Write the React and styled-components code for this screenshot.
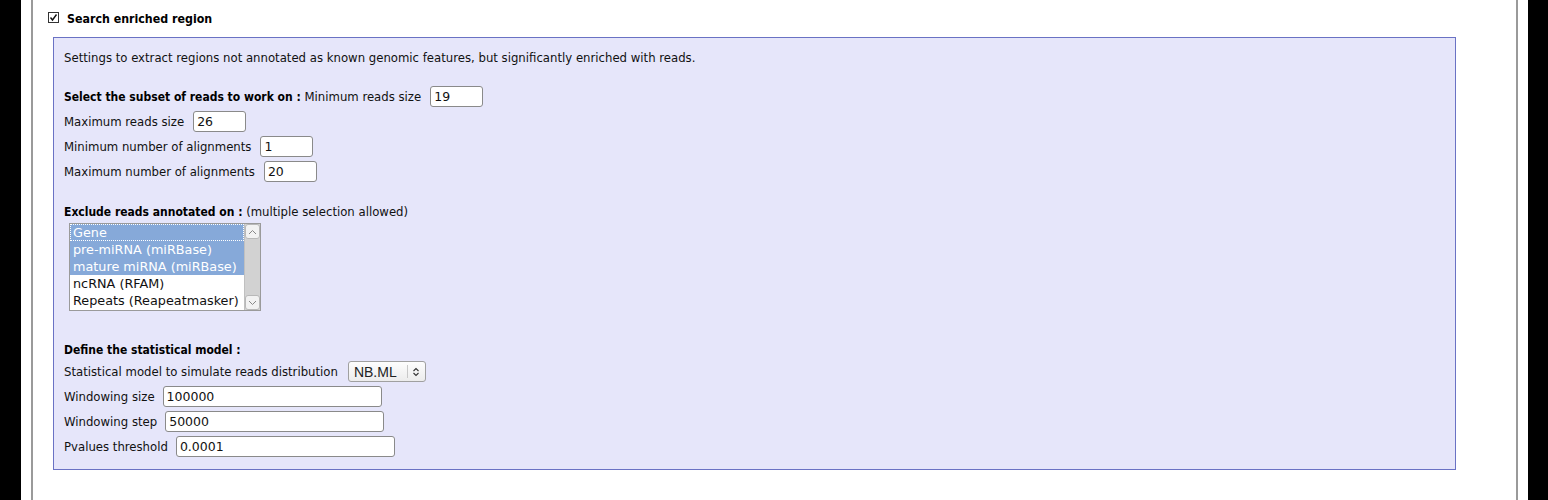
import React from "react"
import styled, { createGlobalStyle } from "styled-components"

const GlobalStyle = createGlobalStyle`
  html, body {
    margin: 0;
    padding: 0;
    background: #000;
  }
  body {
    font-family: "DejaVu Sans Condensed", "DejaVu Sans", sans-serif;
    font-size: 13px;
    color: #111;
  }
`

const annotations = [
  { label: "Gene", selected: true, focus: true },
  { label: "pre-miRNA (miRBase)", selected: true },
  { label: "mature miRNA (miRBase)", selected: true },
  { label: "ncRNA (RFAM)" },
  { label: "Repeats (Reapeatmasker)" },
]

const readFields = [
  { label: "Maximum reads size", value: "26" },
  { label: "Minimum number of alignments", value: "1" },
  { label: "Maximum number of alignments", value: "20" },
]

const windowFields = [
  { label: "Windowing size", value: "100000" },
  { label: "Windowing step", value: "50000" },
  { label: "Pvalues threshold", value: "0.0001" },
]

const CheckIcon = () => (
  <svg width="11" height="11" viewBox="0 0 11 11">
    <rect x="0.5" y="0.5" width="10" height="10" fill="#fff" stroke="#333" />
    <path d="M2.5 5.5 L4.5 8 L8.5 2.5" fill="none" stroke="#111" strokeWidth="1.4" />
  </svg>
)

const App = () => {
  return (
    <Page>
      <GlobalStyle />
      <Frame>
        <Header>
          <CheckIcon />
          <HeaderLabel>Search enriched region</HeaderLabel>
        </Header>
        <Panel>
          <Intro>
            Settings to extract regions not annotated as known genomic features, but
            significantly enriched with reads.
          </Intro>

          <Section>
            <Row>
              <Strong>Select the subset of reads to work on :</Strong>
              &nbsp;Minimum reads size
              <TextBox defaultValue="19" />
            </Row>
            {readFields.map(f => (
              <Row key={f.label}>
                {f.label}
                <TextBox defaultValue={f.value} />
              </Row>
            ))}
          </Section>

          <Title>
            <Strong>Exclude reads annotated on :</Strong> (multiple selection allowed)
          </Title>
          <ListBox>
            <Options>
              {annotations.map(a => (
                <Option key={a.label} $selected={a.selected} $focus={a.focus}>
                  {a.label}
                </Option>
              ))}
            </Options>
            <ScrollBar>
              <ScrollButton>
                <svg width="9" height="6" viewBox="0 0 9 6">
                  <path d="M1 5 L4.5 1.5 L8 5" fill="none" stroke="#888" />
                </svg>
              </ScrollButton>
              <ScrollTrack />
              <ScrollButton>
                <svg width="9" height="6" viewBox="0 0 9 6">
                  <path d="M1 1 L4.5 4.5 L8 1" fill="none" stroke="#888" />
                </svg>
              </ScrollButton>
            </ScrollBar>
          </ListBox>

          <ModelTitle>
            <Strong>Define the statistical model :</Strong>
          </ModelTitle>
          <Row>
            Statistical model to simulate reads distribution
            <SelectBox>
              <SelectValue>NB.ML</SelectValue>
              <SelectArrow>
                <svg width="8" height="10" viewBox="0 0 8 10">
                  <path d="M1.5 4 L4 1.5 L6.5 4 M1.5 6 L4 8.5 L6.5 6" fill="none" stroke="#333" strokeWidth="1.1" />
                </svg>
              </SelectArrow>
            </SelectBox>
          </Row>
          {windowFields.map(f => (
            <Row key={f.label}>
              {f.label}
              <TextBox $wide defaultValue={f.value} />
            </Row>
          ))}
        </Panel>
      </Frame>
    </Page>
  )
}

export default App

const Page = styled.div`
  margin: 0 20px 0 21px;
  background: #fff;
  min-height: 500px;
  padding: 0 10px;
`
const Frame = styled.div`
  border-left: 2px solid #9a9a9a;
  border-right: 2px solid #9a9a9a;
  min-height: 500px;
  padding: 0 60px 0 15px;
  box-sizing: border-box;
`
const Header = styled.div`
  display: flex;
  align-items: center;
  height: 20px;
  padding-top: 9px;
  margin-bottom: 8px;
  svg {
    margin-top: -3px;
  }
`
const HeaderLabel = styled.span`
  margin-left: 8px;
  font-weight: bold;
  font-size: 12.3px;
  color: #000;
`
const Panel = styled.div`
  margin-left: 5px;
  background: #e6e6fa;
  border: 1px solid #6a72c4;
  padding: 10px 10px 10px 10px;
`
const Intro = styled.div`
  line-height: 20px;
  height: 20px;
`
const Section = styled.div`
  margin-top: 16px;
  margin-bottom: 18px;
`
const Row = styled.div`
  display: flex;
  align-items: center;
  height: 25px;
  white-space: pre;
`
const Strong = styled.b`
  font-size: 12px;
  color: #000;
`
const Title = styled.div`
  line-height: 20px;
  height: 20px;
`
const ModelTitle = styled.div`
  line-height: 18px;
  height: 18px;
  margin-top: 30px;
`
const TextBox = styled.input`
  box-sizing: border-box;
  width: ${p => (p.$wide ? "219px" : "53px")};
  height: 21px;
  margin-left: ${p => (p.$wide ? "8px" : "9px")};
  border: 1px solid #8a8a8a;
  border-radius: 3px;
  background: #fff;
  padding: 0 3px;
  font-family: "DejaVu Sans", sans-serif;
  font-size: 12.5px;
  color: #111;
  outline: none;
`
const ListBox = styled.div`
  display: flex;
  box-sizing: border-box;
  width: 192px;
  height: 88px;
  margin: 1px 0 0 5px;
  border: 1px solid #9a9a9a;
  background: #fff;
`
const Options = styled.div`
  flex: 1;
  padding-top: 0;
  font-family: "DejaVu Sans", sans-serif;
  font-size: 12.8px;
`
const Option = styled.div`
  height: 17px;
  line-height: 17px;
  padding-left: 3px;
  box-sizing: border-box;
  background: ${p => (p.$selected ? "#86a9d9" : "#fff")};
  color: ${p => (p.$selected ? "#fff" : "#111")};
  outline: ${p => (p.$focus ? "1px dotted #fff" : "none")};
  outline-offset: -1px;
  white-space: nowrap;
`
const ScrollBar = styled.div`
  width: 15px;
  display: flex;
  flex-direction: column;
  background: #d4d4d4;
  border-left: 1px solid #c0c0c0;
`
const ScrollButton = styled.div`
  height: 15px;
  display: flex;
  align-items: center;
  justify-content: center;
  background: #f2f2f2;
  border: 1px solid #b8b8b8;
  border-radius: 3px;
  box-sizing: border-box;
`
const ScrollTrack = styled.div`
  flex: 1;
  background: #d2d2d2;
`
const SelectBox = styled.div`
  display: flex;
  align-items: center;
  box-sizing: border-box;
  width: 78px;
  height: 21px;
  margin-left: 10px;
  border: 1px solid #a0a0a0;
  border-radius: 3px;
  background: linear-gradient(#fdfdfd, #ececec);
`
const SelectValue = styled.span`
  flex: 1;
  padding-left: 5px;
  font-family: "Liberation Sans", Arial, sans-serif;
  font-size: 14px;
  color: #222;
`
const SelectArrow = styled.span`
  width: 17px;
  height: 13px;
  display: flex;
  align-items: center;
  justify-content: center;
  border-left: 1px solid #c8c8c8;
`
